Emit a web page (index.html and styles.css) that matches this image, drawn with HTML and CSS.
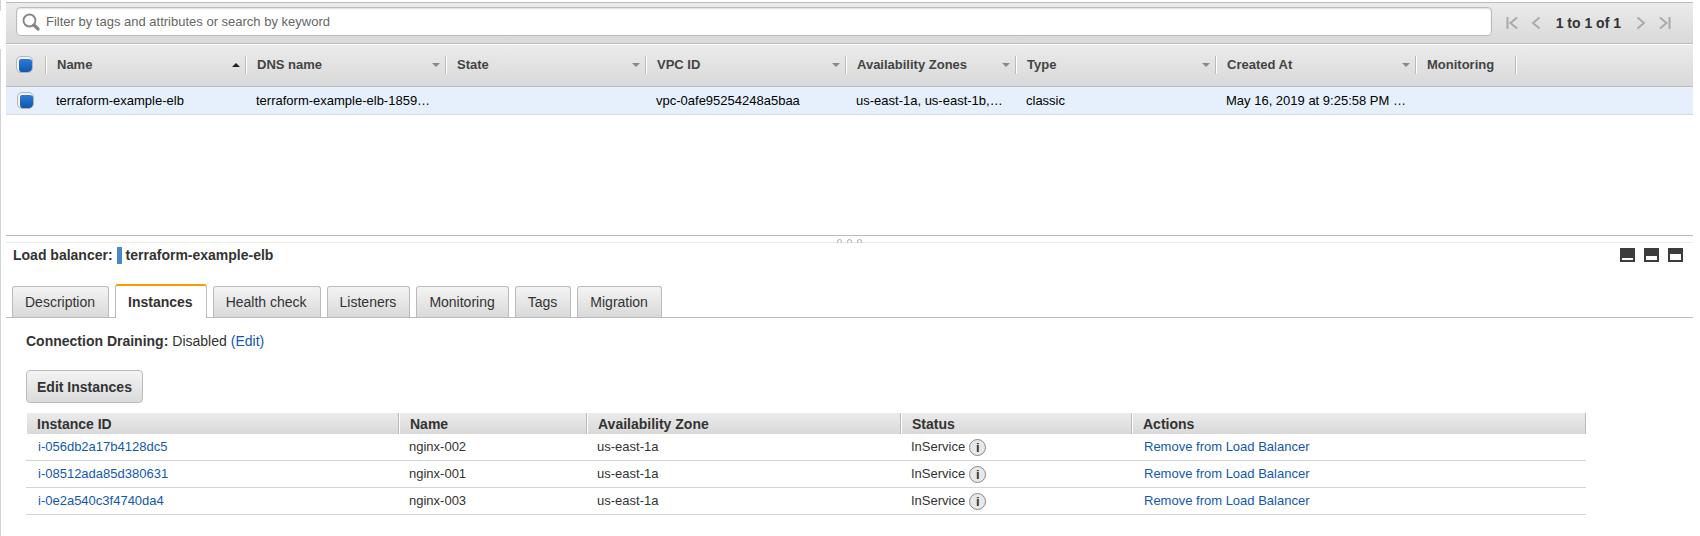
FILE: index.html
```html
<!DOCTYPE html>
<html lang="en">
<head>
<meta charset="utf-8">
<title>Load Balancers</title>
<link rel="stylesheet" href="styles.css">
</head>
<body>
<main class="console">
  <div class="toolbar">
    <label class="search">
      <svg class="search-icon" width="18" height="18" viewBox="0 0 18 18" aria-hidden="true"><circle cx="7.500" cy="7.500" r="6" fill="none" stroke="#858585" stroke-width="1.8"/><path d="M12 12L16 16" stroke="#858585" stroke-width="3.2" stroke-linecap="round"/></svg>
      <input type="text" class="search-input" aria-label="Filter load balancers" placeholder="Filter by tags and attributes or search by keyword">
    </label>
    <nav class="pager" aria-label="Pages">
      <button class="page-btn" aria-label="First page"><svg width="12" height="14" viewBox="0 0 12 14"><path d="M1.5 1v12M11 1.5L4.5 7l6.5 5.500"/></svg></button>
      <button class="page-btn" aria-label="Previous page"><svg width="12" height="14" viewBox="0 0 12 14"><path d="M9.500 1.500L3 7l6.500 5.500"/></svg></button>
      <span class="page-range">1 to 1 of 1</span>
      <button class="page-btn" aria-label="Next page"><svg width="12" height="14" viewBox="0 0 12 14"><path d="M2.500 1.500L9 7l-6.500 5.500"/></svg></button>
      <button class="page-btn" aria-label="Last page"><svg width="12" height="14" viewBox="0 0 12 14"><path d="M10.500 1v12M1 1.500L7.500 7L1 12.500"/></svg></button>
    </nav>
  </div>

  <div class="list">
    <table class="lb-table">
      <colgroup><col class="c-check"><col class="c-wide"><col class="c-wide"><col class="c-wide"><col class="c-wide"><col class="c-zones"><col class="c-wide"><col class="c-wide"><col class="c-mon"><col></colgroup>
      <thead>
        <tr>
          <th><input type="checkbox" class="check" aria-label="Select all" checked></th>
          <th><div class="head">Name<i class="arrow up"></i></div></th>
          <th><div class="head">DNS name<i class="arrow"></i></div></th>
          <th><div class="head">State<i class="arrow"></i></div></th>
          <th><div class="head">VPC ID<i class="arrow"></i></div></th>
          <th><div class="head">Availability Zones<i class="arrow"></i></div></th>
          <th><div class="head">Type<i class="arrow"></i></div></th>
          <th><div class="head">Created At<i class="arrow"></i></div></th>
          <th><div class="head">Monitoring</div></th>
          <th><div class="head"></div></th>
        </tr>
      </thead>
      <tbody>
        <tr>
          <td><input type="checkbox" class="check" aria-label="Select terraform-example-elb" checked></td>
          <td>terraform-example-elb</td>
          <td>terraform-example-elb-1859…</td>
          <td></td>
          <td>vpc-0afe95254248a5baa</td>
          <td>us-east-1a, us-east-1b,…</td>
          <td>classic</td>
          <td>May 16, 2019 at 9:25:58 PM …</td>
          <td></td>
          <td></td>
        </tr>
      </tbody>
    </table>
  </div>

  <div class="splitter">
    <svg width="26" height="4" viewBox="0 0 26 4" aria-hidden="true"><g fill="#fff" stroke="#aaa"><circle cx="2.500" cy="2.500" r="2"/><circle cx="12.500" cy="2.500" r="2"/><circle cx="22.500" cy="2.500" r="2"/></g></svg>
  </div>

  <section class="detail">
    <header class="detail-head">
      <h1 class="detail-title">Load balancer:<span class="marker"></span>terraform-example-elb</h1>
      <div class="layouts">
        <button class="layout-btn" aria-label="Small panel"><svg width="15" height="14"><path fill="#3c3c3c" d="M0 0h15v14H0z"/><path fill="#fff" d="M2 10h11v2H2z"/></svg></button>
        <button class="layout-btn" aria-label="Half panel"><svg width="15" height="14"><path fill="#3c3c3c" d="M0 0h15v14H0z"/><path fill="#fff" d="M2 8h11v4H2z"/></svg></button>
        <button class="layout-btn" aria-label="Full panel"><svg width="15" height="14"><path fill="#3c3c3c" d="M0 0h15v14H0z"/><path fill="#fff" d="M2 6h11v6H2z"/></svg></button>
      </div>
    </header>

    <div class="tabs" role="tablist">
      <button class="tab" role="tab">Description</button>
      <button class="tab active" role="tab" aria-selected="true">Instances</button>
      <button class="tab" role="tab">Health check</button>
      <button class="tab" role="tab">Listeners</button>
      <button class="tab" role="tab">Monitoring</button>
      <button class="tab" role="tab">Tags</button>
      <button class="tab" role="tab">Migration</button>
    </div>

    <div class="panel">
      <p class="draining"><b>Connection Draining:</b><span>Disabled</span><a href="#">(Edit)</a></p>
      <button class="edit-btn">Edit Instances</button>
      <table class="inst-table">
        <colgroup><col class="i-id"><col class="i-name"><col class="i-zone"><col class="i-status"><col></colgroup>
        <thead>
          <tr><th>Instance ID</th><th>Name</th><th>Availability Zone</th><th>Status</th><th>Actions</th></tr>
        </thead>
        <tbody>
          <tr>
            <td><a href="#">i-056db2a17b4128dc5</a></td><td>nginx-002</td><td>us-east-1a</td>
            <td><div class="status">InService<button class="info" aria-label="Status details">i</button></div></td>
            <td><a href="#">Remove from Load Balancer</a></td>
          </tr>
          <tr>
            <td><a href="#">i-08512ada85d380631</a></td><td>nginx-001</td><td>us-east-1a</td>
            <td><div class="status">InService<button class="info" aria-label="Status details">i</button></div></td>
            <td><a href="#">Remove from Load Balancer</a></td>
          </tr>
          <tr>
            <td><a href="#">i-0e2a540c3f4740da4</a></td><td>nginx-003</td><td>us-east-1a</td>
            <td><div class="status">InService<button class="info" aria-label="Status details">i</button></div></td>
            <td><a href="#">Remove from Load Balancer</a></td>
          </tr>
        </tbody>
      </table>
    </div>
  </section>
</main>
</body>
</html>
```
FILE: styles.css
```css
* { box-sizing: border-box; }

html { height: 100%; }

body {
  margin: 0;
  min-height: 100%;
  padding: 2px 7px 0 6px;
  font: 14px/18px "Liberation Sans", Arial, sans-serif;
  color: #333;
  background: linear-gradient(#d4d4d4 0 11px, #fff 11px 49px, #d4d4d4 49px) left top / 1px 100% no-repeat #fff;
}

button { font: inherit; color: inherit; cursor: pointer; }
a { color: #1158b5; text-decoration: none; }

/* search and paging */
.toolbar {
  display: flex;
  align-items: center;
  gap: 14px;
  height: 42px;
  padding: 0 22px 3px 10px;
  border-top: 1px solid #bbb;
  border-bottom: 1px solid #bbb;
  background: linear-gradient(#ebebeb, #d9d9d9);
}
.search {
  flex: 1;
  display: flex;
  align-items: center;
  gap: 6px;
  height: 29px;
  padding: 0 5px;
  border: 1px solid #bbb;
  border-radius: 4px;
  background: #fff;
  box-shadow: inset 0 1px 2px #ddd;
}
.search-input {
  flex: 1;
  padding: 0;
  border: 0;
  outline: 0;
  background: none;
  font: 13px/18px "Liberation Sans", Arial, sans-serif;
}
.search-input::placeholder { color: #666; opacity: 1; }
.pager { display: flex; align-items: center; gap: 12px; padding-top: 2px; }
.page-btn { display: flex; padding: 0; border: 0; background: none; }
.page-btn path { fill: none; stroke: #aaa; stroke-width: 2; }
.page-range { margin: 0 2px; font-weight: bold; }

/* load balancer list */
.list { height: 191px; padding-top: 1px; }
.lb-table {
  width: 100%;
  table-layout: fixed;
  border-collapse: separate;
  border-spacing: 0;
  font-size: 13px;
}
.c-check { width: 39px; }
.c-wide { width: 200px; }
.c-zones { width: 170px; }
.c-mon { width: 100px; }
.lb-table th {
  height: 42px;
  padding: 0 0 2px;
  border-bottom: 1px solid #bbb;
  background: linear-gradient(#ebebeb, #d9d9d9);
  text-align: left;
  color: #444;
}
.lb-table td {
  height: 28px;
  padding: 0 0 0 11px;
  border-bottom: 1px solid #d9d9d9;
  background: #e6f0fc;
  color: #000;
  white-space: nowrap;
}
.lb-table th:first-child { padding-left: 10px; }
.head {
  display: flex;
  align-items: center;
  justify-content: space-between;
  height: 18px;
  padding: 0 5px 0 11px;
  border-left: 1px solid #bbb;
  box-shadow: inset 1px 0 #fff;
}
.arrow {
  border: 4px solid transparent;
  border-bottom: 0;
  border-top-color: #888;
}
.arrow.up {
  border: 4px solid transparent;
  border-top: 0;
  border-bottom-color: #222;
}
.check {
  appearance: none;
  display: block;
  width: 17px;
  height: 17px;
  margin: 0;
  padding: 2px 0 0 2px;
  border: 1px solid #b5b5b5;
  border-radius: 5px;
  background: linear-gradient(#eee, #fff);
}
.check:checked {
  background: linear-gradient(#2b7bd6, #1057b0) content-box, #f2f2f2;
}

/* splitter */
.splitter {
  display: flex;
  justify-content: center;
  align-items: flex-end;
  height: 8px;
  padding-top: 3px;
  border-top: 1px solid #bbb;
  background: linear-gradient(#ebebeb, #ebebeb) left bottom / 100% 1px no-repeat;
}
.splitter svg { display: block; }

/* detail pane */
.detail-head {
  display: flex;
  align-items: center;
  justify-content: space-between;
  height: 24px;
  padding: 0 10px 0 7px;
}
.detail-title {
  display: flex;
  align-items: center;
  gap: 4px;
  margin: 0;
  font-size: 14px;
}
.marker { width: 5px; height: 17px; background: #4a87c7; }
.layouts { display: flex; gap: 9px; }
.layout-btn { display: flex; padding: 0; border: 0; background: none; }

.tabs {
  display: flex;
  align-items: flex-end;
  gap: 6px;
  margin-top: 17px;
  padding-left: 6px;
  border-bottom: 1px solid #bbb;
}
.tab {
  height: 31px;
  padding: 0 13px 0 12px;
  border: 1px solid #bbb;
  border-bottom: 0;
  border-radius: 3px 3px 0 0;
  background: linear-gradient(#f4f4f4, #d9d9d9);
}
.tab.active {
  height: 34px;
  margin-bottom: -1px;
  border-top: 2px solid #ff9900;
  background: #fff;
  font-weight: bold;
}

.panel { padding: 14px 107px 0 20px; }
.draining { display: flex; gap: 4px; margin: 0 0 20px; }
.edit-btn {
  display: block;
  height: 33px;
  padding: 0 10px;
  border: 1px solid #bbb;
  border-radius: 4px;
  background: linear-gradient(#f4f4f4, #dadada);
  font-weight: bold;
}

.inst-table {
  width: 100%;
  margin-top: 10px;
  table-layout: fixed;
  border-collapse: separate;
  border-spacing: 0;
  font-size: 13px;
}
.i-id { width: 373px; }
.i-name { width: 188px; }
.i-zone { width: 314px; }
.i-status { width: 231px; }
.inst-table th {
  height: 21px;
  padding: 0 0 0 11px;
  border-right: 1px solid #bbb;
  box-shadow: inset 1px 0 #fff;
  background: linear-gradient(#ebebeb, #d9d9d9);
  font-size: 14px;
  text-align: left;
}
.inst-table td {
  height: 27px;
  padding: 0 0 0 10px;
  border-bottom: 1px solid #d4d4d4;
}
.inst-table td:first-child, .inst-table td:last-child { padding-left: 12px; }
.status { display: flex; align-items: center; gap: 4px; }
.info {
  width: 17px;
  height: 17px;
  padding: 0;
  border: 1px solid #888;
  border-radius: 50%;
  background: #e8e8e8;
  font-size: 13px;
  font-weight: bold;
  line-height: 15px;
}
```
